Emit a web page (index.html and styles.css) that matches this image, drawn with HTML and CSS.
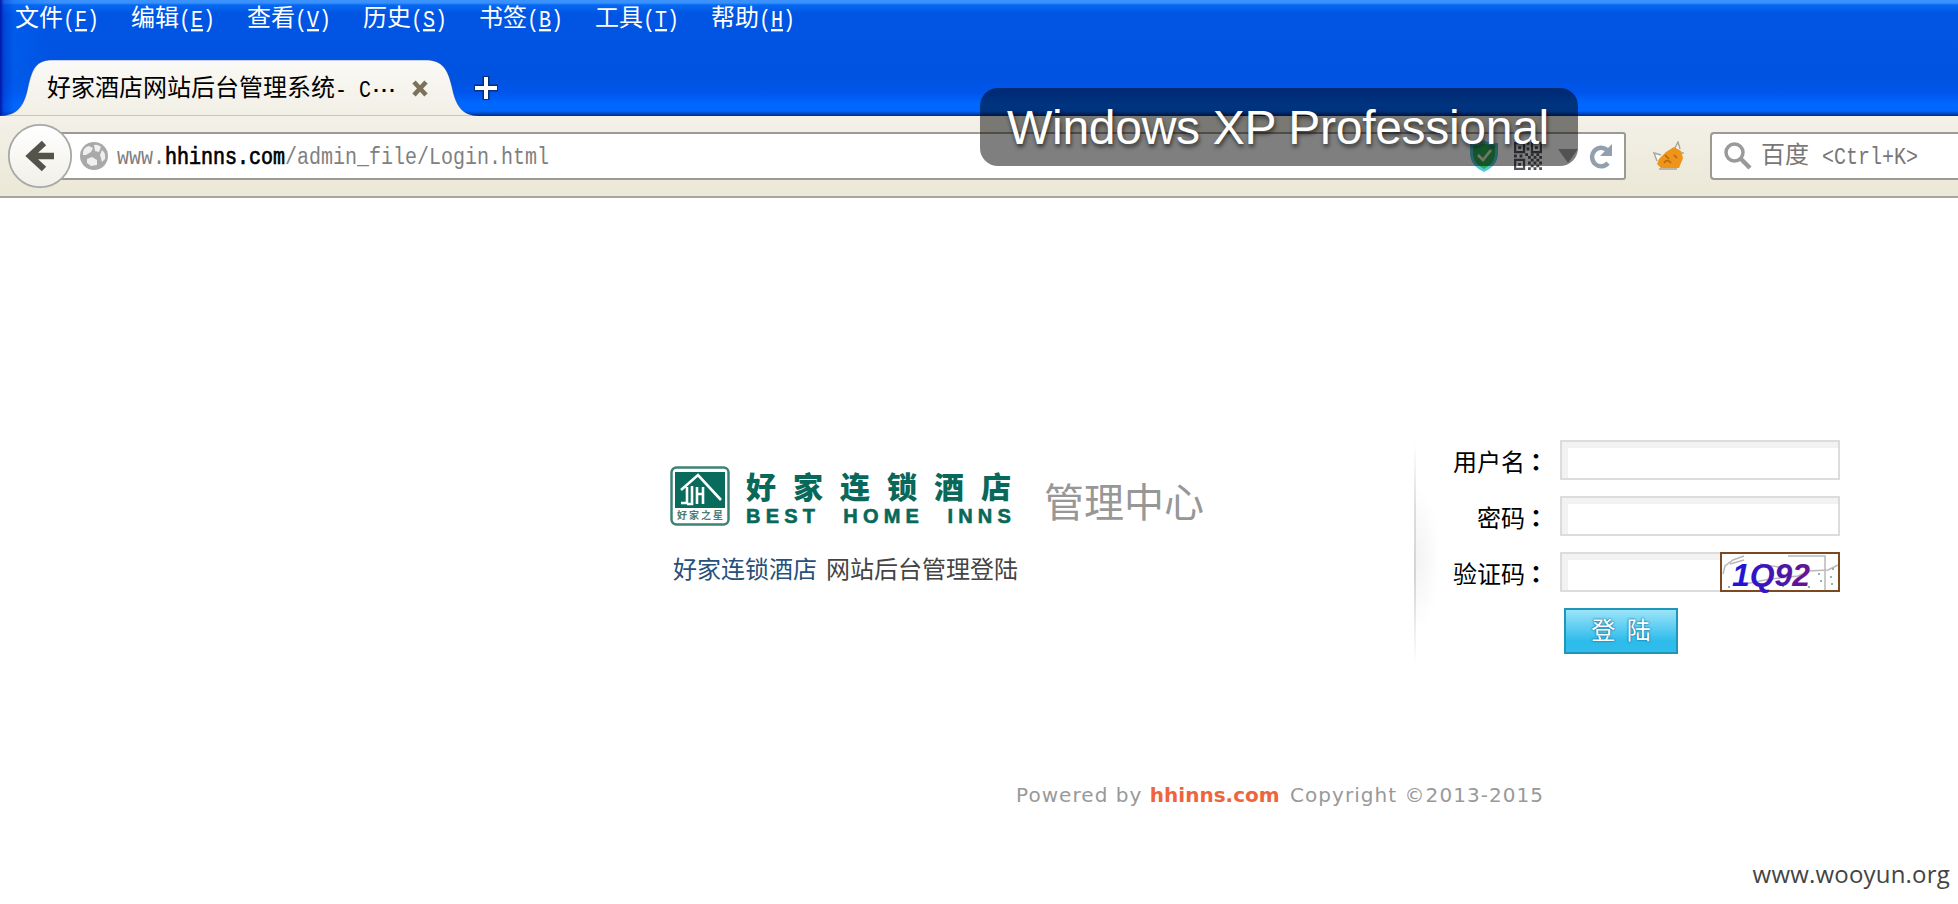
FILE: index.html
```html
<!DOCTYPE html>
<html lang="zh-CN">
<head>
<meta charset="utf-8">
<title>好家酒店网站后台管理系统</title>
<link rel="stylesheet" href="styles.css">
</head>
<body>
<header class="titlebar">
  <nav class="menu">
    <span>文件<i>(<u>F</u>)</i></span><span>编辑<i>(<u>E</u>)</i></span><span>查看<i>(<u>V</u>)</i></span><span>历史<i>(<u>S</u>)</i></span><span>书签<i>(<u>B</u>)</i></span><span>工具<i>(<u>T</u>)</i></span><span>帮助<i>(<u>H</u>)</i></span>
  </nav>
  <div class="tabs">
    <div class="tab">
      <svg class="tab-shape" width="480" height="56" viewBox="0 0 480 56">
        <defs><linearGradient id="tabfill" x1="0" y1="0" x2="0" y2="1"><stop offset="0" stop-color="#faf9f5"/><stop offset="1" stop-color="#f1efe5"/></linearGradient></defs>
        <path d="M0 56C18 55 24 46 28 27C32 9 36 0 52 0H426C442 0 448 9 452 27C456 46 462 55 478 56Z" fill="url(#tabfill)" stroke="#0a3fae" stroke-opacity=".45"/>
      </svg>
      <span class="tab-title">好家酒店网站后台管理系统<i>- C</i><b>···</b></span>
      <svg class="tab-close" width="16" height="17" viewBox="0 0 16 17"><path d="M2 2L14 15M14 2L2 15" stroke="#7c725c" stroke-width="4.6"/></svg>
    </div>
    <svg class="tab-new" width="26" height="26" viewBox="0 0 26 26"><path d="M13 1V25M1 13H25" stroke="#063078" stroke-width="7"/><path d="M13 2V24M2 13H24" stroke="#fff" stroke-width="4"/></svg>
  </div>
</header>
<div class="toolbar">
  <svg class="back" width="66" height="66" viewBox="0 0 66 66">
    <defs><linearGradient id="backfill" x1="0" y1="0" x2="0" y2="1"><stop offset="0" stop-color="#fff"/><stop offset="1" stop-color="#f1f0e8"/></linearGradient></defs>
    <circle cx="33" cy="33" r="31.2" fill="url(#backfill)" stroke="#a5a9a8" stroke-width="1.8"/>
    <path d="M37 20L23 33L37 46M24 33H47" fill="none" stroke="#55544b" stroke-width="6.4"/>
  </svg>
  <div class="urlbar">
    <svg class="globe" width="28" height="28" viewBox="0 0 28 28">
      <circle cx="14" cy="14" r="14" fill="#a9a9a9"/>
      <path d="M3 10Q4 5 9 4L13 6L11 10L6 13L3 13ZM14 3Q18 2 21 5L19 10L15 9ZM7 17L12 15L17 18V23L11 24L7 21ZM22 8Q26 11 25 17L22 20L20 13Z" fill="#efefef"/>
    </svg>
    <span class="url">www.<b>hhinns.com</b>/admin_file/Login.html</span>
    <div class="url-icons">
      <svg class="shield" width="30" height="32" viewBox="0 0 30 32">
        <path d="M1 3Q9 4 15 0Q21 4 29 3V15Q28 26 15 32Q2 26 1 15Z" fill="#58c6d8"/>
        <path d="M4 6Q10 6 15 3Q20 6 26 6V15Q25 24 15 29Q5 24 4 15Z" fill="#28ad55"/>
        <path d="M9 15L14 20L22 10" fill="none" stroke="#e6ecc8" stroke-width="2.800"/>
      </svg>
      <svg class="qr" width="28" height="28" viewBox="0 0 20 20">
        <path d="M.8 .8H7.200V7.200H.8ZM12.800 .8H19.200V7.200H12.800ZM.8 12.800H7.200V19.200H.8Z" fill="none" stroke="#50555c" stroke-width="1.600"/>
        <path d="M3 3h2v2H3ZM15 3h2v2h-2ZM3 15h2v2H3ZM9 0h2v2H9ZM9 4h2v2H9ZM8 8h2v2H8ZM0 9h2v2H0ZM4 9h2v2H4ZM10 10h2v2h-2ZM12 8h2v2h-2ZM14 10h2v2h-2ZM16 8h2v2h-2ZM18 10h2v2h-2ZM12 12h2v2h-2ZM16 12h2v2h-2ZM10 14h2v2h-2ZM14 14h2v2h-2ZM18 14h2v2h-2ZM12 16h2v2h-2ZM16 16h2v2h-2ZM10 18h2v2h-2ZM14 18h2v2h-2ZM18 18h2v2h-2Z" fill="#50555c"/>
      </svg>
      <svg class="drop" width="20" height="14" viewBox="0 0 20 14"><path d="M0 0H20L10 14Z" fill="#a4a4a4"/></svg>
      <svg class="reload" width="24" height="25" viewBox="0 0 24 25"><path d="M18 6A9 9.300 0 1 0 19 19" fill="none" stroke="#929fac" stroke-width="4.400"/><path d="M23 0V12H11Z" fill="#929fac"/></svg>
    </div>
  </div>
  <svg class="addon" width="34" height="30" viewBox="0 0 34 30">
    <path d="M9 14L2 12L5 20M23 7L26 1L28 8M28 12L32 12M7 28H25" stroke="#aaa79f" stroke-width="1.500" fill="#fbfaf5"/>
    <path d="M7 18L14 11L22 6L29 10L31 17L27 27H9L5 23Z" fill="#ee9418"/>
    <path d="M12 22Q15 17 19 22M22 14L25 17M13 14L17 18" stroke="#b5640f" stroke-width="1.600" fill="none"/>
  </svg>
  <div class="search">
    <svg width="28" height="28" viewBox="0 0 28 28"><circle cx="10.500" cy="10.500" r="8.500" fill="none" stroke="#9a9a9a" stroke-width="3.500"/><path d="M16 16L26 26" stroke="#9a9a9a" stroke-width="4.500"/></svg>
    <span>百度<i>&lt;Ctrl+K&gt;</i></span>
  </div>
</div>
<div class="caption">Windows XP Professional</div>
<main class="page">
  <section class="brand">
    <div class="brand-row">
      <svg class="emblem" width="60" height="60" viewBox="0 0 60 60">
        <rect x="1.500" y="1.500" width="57" height="57" rx="5" fill="#fff" stroke="#3d8375" stroke-width="2.500"/>
        <rect x="5" y="6" width="50" height="36" fill="#086b5b"/>
        <path d="M11 24L28 9L51 34M17 21V37H11M22 20V38H17M27 21V38M27 28H33M33 21V38" fill="none" stroke="#fff" stroke-width="2.600"/>
        <text x="7" y="53" textLength="46" class="emblem-text">好家之星</text>
      </svg>
      <div class="wordmark">
        <div class="wordmark-cn"><span>好</span><span>家</span><span>连</span><span>锁</span><span>酒</span><span>店</span></div>
        <div class="wordmark-en"><span>BEST</span><span>HOME</span><span>INNS</span></div>
      </div>
      <h1>管理中心</h1>
    </div>
    <p class="subtitle"><a>好家连锁酒店</a><span>网站后台管理登陆</span></p>
  </section>
  <div class="divider"></div>
  <form class="login">
    <label>用户名<em>：</em></label><div class="field"></div>
    <label>密码<em>：</em></label><div class="field"></div>
    <label>验证码<em>：</em></label>
    <div class="code-row"><div class="field"></div>
      <svg class="captcha" width="120" height="40" viewBox="0 0 120 40">
        <defs><linearGradient id="code" x1="0" x2="1"><stop offset="0" stop-color="#1714e0"/><stop offset="1" stop-color="#6b148f"/></linearGradient></defs>
        <rect x="1" y="1" width="118" height="38" fill="#fff" stroke="#7c4a20" stroke-width="2"/>
        <path d="M3 22L5 14L13 8L24 4M10 12L24 8M40 12L64 16M68 4H105V38M25 32L50 27L78 24L88 19L108 18L118 13" fill="none" stroke="#b9b9b9" stroke-width="1.500"/>
        <path d="M98 22h2M100 29h2M88 35h2M112 17h2M110 25h2M111 32h2M8 35h2M62 34h2" stroke="#8cb4b4" stroke-width="2"/>
        <text x="12" y="34" textLength="78" lengthAdjust="spacingAndGlyphs" class="captcha-text" fill="url(#code)">1Q92</text>
      </svg>
    </div>
    <span></span><button type="button">登 陆</button>
  </form>
</main>
<footer class="footer">
  <p class="copyright">Powered by <b>hhinns.com</b> Copyright ©2013-2015</p>
  <p class="site">www.wooyun.org</p>
</footer>
</body>
</html>
```
FILE: styles.css
```css
* { box-sizing: border-box; }
body { margin: 0; width: 1958px; height: 904px; overflow: hidden; position: relative; background: #fff; color: #000; font: 24px/30px "Liberation Mono", "Noto Sans CJK SC", sans-serif; display: flex; flex-direction: column; }
svg { display: block; flex: none; }
i { display: inline-block; font-style: normal; font-size: 20px; white-space: pre; transform: scaleY(1.15); }
p, h1 { margin: 0; }

.titlebar { height: 116px; flex: none; padding-top: 5px; background: linear-gradient(90deg, #0018a8 0, rgba(0,60,210,.6) 4px, rgba(0,100,245,.45) 14px, transparent 50px), linear-gradient(#3a93ff 0, #3a90fb 3px, #0568f2 5px, #0055e2 14px, #0053e1 80px, #0057ee 94px, #0068ff 104px, #0066fd 111px, #0042b4 114px, #002c7c 116px); }
.menu { display: flex; gap: 32px; padding-left: 15px; height: 55px; color: #fff; }
.menu span { width: 84px; white-space: nowrap; }
.menu u { text-underline-offset: 2px; text-decoration-thickness: 2px; }
.tabs { display: flex; height: 56px; }
.tab { position: relative; width: 474px; display: flex; align-items: center; padding-left: 47px; }
.tab-shape { position: absolute; left: 0; top: 0; }
.tab-title { position: relative; width: 365px; padding-top: 4px; white-space: nowrap; }
.tab-title b { font-size: 20px; letter-spacing: -4px; margin-left: -1px; }
.tab-close { position: relative; }
.tab-new { margin-top: 15px; margin-left: -1px; }

.toolbar { height: 82px; flex: none; display: flex; align-items: center; padding-left: 7px; border-bottom: 2px solid #a8a69a; background: linear-gradient(#f3f1e8, #ebe8d7); }
.back { position: relative; z-index: 1; }
.urlbar { width: 1580px; height: 48px; margin-left: -27px; display: flex; align-items: center; padding-left: 32px; border: 2px solid #9c9b91; border-radius: 3px; background: #fff; }
.url { margin-left: 9px; padding-top: 4px; font-size: 20px; color: #808080; transform: scaleY(1.15); }
.url b { color: #000; font-weight: 400; -webkit-text-stroke: .6px #000; }
.url-icons { flex: 1; display: flex; align-items: center; justify-content: flex-end; padding-right: 11px; }
.qr { margin-left: 15px; }
.drop { margin-left: 16px; }
.reload { margin-left: 11px; }
.addon { margin: 0 24px 0 26px; }
.search { flex: 1; height: 48px; display: flex; align-items: center; gap: 9px; padding-left: 12px; border: 2px solid #9c9b91; border-right: 0; border-radius: 4px 0 0 4px; background: #fff; color: #777; white-space: nowrap; }
.search span { padding-top: 3px; }
.search i { margin-left: 13px; }

.caption { position: absolute; z-index: 2; left: 980px; top: 88px; width: 598px; height: 78px; border-radius: 18px; background: rgba(0,0,0,.5); color: #fff; font: 48px/80px "Liberation Sans", sans-serif; letter-spacing: -.3px; text-indent: -2px; text-align: center; text-shadow: 1px 3px 4px rgba(0,0,0,.6); white-space: nowrap; }

.page { flex: 1; display: flex; align-items: flex-start; padding: 242px 0 0 670px; }
.brand { width: 744px; padding-top: 26px; }
.brand-row { display: flex; height: 60px; }
.emblem-text { font: bold 10px "Noto Sans CJK SC", sans-serif; fill: #4b7b72; }
.wordmark { width: 265px; margin-left: 16px; color: #08685a; }
.wordmark-cn { display: flex; justify-content: space-between; height: 40px; font: 900 30px/39px "Noto Sans CJK SC", sans-serif; }
.wordmark-en { display: flex; justify-content: space-between; font: bold 20px/20px "Liberation Sans", sans-serif; -webkit-text-stroke: .6px #08685a; }
.wordmark-en span { letter-spacing: 5.2px; margin-right: -5px; }
h1 { margin-left: 33px; padding-top: 5px; font: 400 40px/58px "Noto Sans CJK SC", sans-serif; color: #979797; white-space: nowrap; }
.subtitle { display: flex; gap: 9px; margin: 31px 0 0 3px; color: #444; }
.subtitle a { color: #27507a; }
.divider { width: 24px; height: 220px; margin-top: 4px; border-left: 2px solid; border-image: linear-gradient(transparent, #ddd 30%, #d4d4d4 60%, transparent) 1; background: radial-gradient(ellipse 24px 72px at 0 52%, #f3f3f3, transparent); }
.login { width: 402px; display: grid; grid-template-columns: 111px 280px; column-gap: 11px; row-gap: 16px; line-height: 50px; }
.login label { height: 40px; text-align: right; white-space: nowrap; }
.login em { display: inline-block; margin-right: 1px; margin-left: -1px; font: bold 24px/40px "Noto Sans CJK TC", sans-serif; }
.field { width: 280px; height: 40px; border: 2px solid #dcdcdc; background: #fff; box-shadow: inset 6px 6px 0 #f2f2f2; }
.code-row { display: flex; }
.code-row .field { width: 160px; border-right: 0; }
.captcha { overflow: visible; }
.captcha-text { font: italic bold 31px "Liberation Sans", sans-serif; }
button { width: 114px; height: 46px; margin-left: 4px; padding: 4px 0 0; border: 2px solid #2096b9; background: linear-gradient(#9be4f8 0, #68d1f3 35%, #2cbbea 75%, #32bdec); color: #fff; font: 24px/38px "Liberation Mono", "Noto Sans CJK SC", sans-serif; word-spacing: -3px; text-shadow: 0 0 2px #1678a0, 0 0 2px #1678a0; }

.footer { height: 142px; flex: none; }
.copyright { margin: 18px 0 0 1016px; font: 20px/30px "DejaVu Sans", sans-serif; letter-spacing: 1.05px; color: #999; white-space: nowrap; }
.copyright b { color: #f0643c; letter-spacing: 0; margin-right: 3px; }
.site { margin: 49px 8px 0 0; text-align: right; font: 24px/30px "Open Sans", sans-serif; letter-spacing: .2px; color: #444; }
```
